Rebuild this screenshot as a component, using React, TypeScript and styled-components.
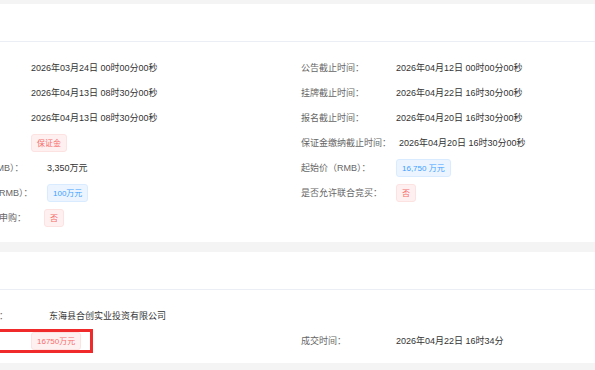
import React from "react";
import styled, { createGlobalStyle } from "styled-components";

const GlobalStyle = createGlobalStyle`
  html, body {
    margin: 0;
    padding: 0;
    background: #f4f4f5;
    overflow: hidden;
  }
  body {
    font-family: "Liberation Sans", "Noto Sans CJK SC", sans-serif;
  }
`;

const Page = styled.div`
  width: 595px;
  height: 370px;
  padding-top: 4px;
  box-sizing: border-box;
  overflow: hidden;
`;

const Card = styled.section`
  background: #fff;
  & + & {
    margin-top: 10px;
  }
`;

const CardHeader = styled.div`
  height: 37px;
  border-bottom: 1px solid #ebeef5;
`;

interface ICardBody {
  $pt: number;
  $pb: number;
}
const CardBody = styled.div<ICardBody>`
  display: grid;
  grid-template-columns: 365px 1fr;
  grid-auto-rows: 25px;
  margin-left: -64px;
  padding: ${p => p.$pt}px 0 ${p => p.$pb}px;
`;

interface IField {
  $highlight?: boolean;
}
const Field = styled.div<IField>`
  display: flex;
  align-items: center;
  align-self: center;
  justify-self: start;
  white-space: nowrap;
  ${p =>
    p.$highlight &&
    `
    padding-right: 9px;
    outline: 3px solid #f02a2a;
  `}
`;

interface ILabel {
  $w?: number;
}
const Label = styled.span<ILabel>`
  flex: 0 0 auto;
  min-width: ${p => p.$w || 95}px;
  box-sizing: border-box;
  padding-right: 8px;
  font-size: 9px;
  color: #666;
`;

const Value = styled.span`
  font-size: 9px;
  color: #333;
`;

interface ITag {
  $type: "danger" | "primary";
}
const Tag = styled.span<ITag>`
  display: inline-flex;
  align-items: center;
  height: 18px;
  box-sizing: border-box;
  padding: 0 5px;
  font-size: 8px;
  border-radius: 3px;
  border: 1px solid ${p => (p.$type === "danger" ? "#fde2e2" : "#d9ecff")};
  background: ${p => (p.$type === "danger" ? "#fef0f0" : "#ecf5ff")};
  color: ${p => (p.$type === "danger" ? "#f56c6c" : "#409eff")};
`;

const Empty = styled.div``;

export default function App() {
  return (
    <>
      <GlobalStyle />
      <Page>
        <Card>
          <CardHeader />
          <CardBody $pt={13} $pb={12}>
            <Field>
              <Label>挂牌开始时间：</Label>
              <Value>2026年03月24日 00时00分00秒</Value>
            </Field>
            <Field>
              <Label>公告截止时间：</Label>
              <Value>2026年04月12日 00时00分00秒</Value>
            </Field>

            <Field>
              <Label>报名开始时间：</Label>
              <Value>2026年04月13日 08时30分00秒</Value>
            </Field>
            <Field>
              <Label>挂牌截止时间：</Label>
              <Value>2026年04月22日 16时30分00秒</Value>
            </Field>

            <Field>
              <Label>竞价开始时间：</Label>
              <Value>2026年04月13日 08时30分00秒</Value>
            </Field>
            <Field>
              <Label>报名截止时间：</Label>
              <Value>2026年04月20日 16时30分00秒</Value>
            </Field>

            <Field>
              <Label>交纳方式：</Label>
              <Tag $type="danger">保证金</Tag>
            </Field>
            <Field>
              <Label>保证金缴纳截止时间：</Label>
              <Value>2026年04月20日 16时30分00秒</Value>
            </Field>

            <Field>
              <Label $w={111}>保证金金额（RMB）：</Label>
              <Value>3,350万元</Value>
            </Field>
            <Field>
              <Label>起始价（RMB）：</Label>
              <Tag $type="primary">16,750 万元</Tag>
            </Field>

            <Field>
              <Label $w={111}>每次加价幅度（RMB）：</Label>
              <Tag $type="primary">100万元</Tag>
            </Field>
            <Field>
              <Label>是否允许联合竞买：</Label>
              <Tag $type="danger">否</Tag>
            </Field>

            <Field>
              <Label $w={108}>是否允许原股东申购：</Label>
              <Tag $type="danger">否</Tag>
            </Field>
            <Empty />
          </CardBody>
        </Card>

        <Card>
          <CardHeader />
          <CardBody $pt={13} $pb={10}>
            <Field>
              <Label $w={113}>竞得人单位名称：</Label>
              <Value>东海县合创实业投资有限公司</Value>
            </Field>
            <Empty />

            <Field $highlight>
              <Label>成交价格：</Label>
              <Tag $type="danger">16750万元</Tag>
            </Field>
            <Field>
              <Label>成交时间：</Label>
              <Value>2026年04月22日 16时34分</Value>
            </Field>
          </CardBody>
        </Card>
      </Page>
    </>
  );
}
